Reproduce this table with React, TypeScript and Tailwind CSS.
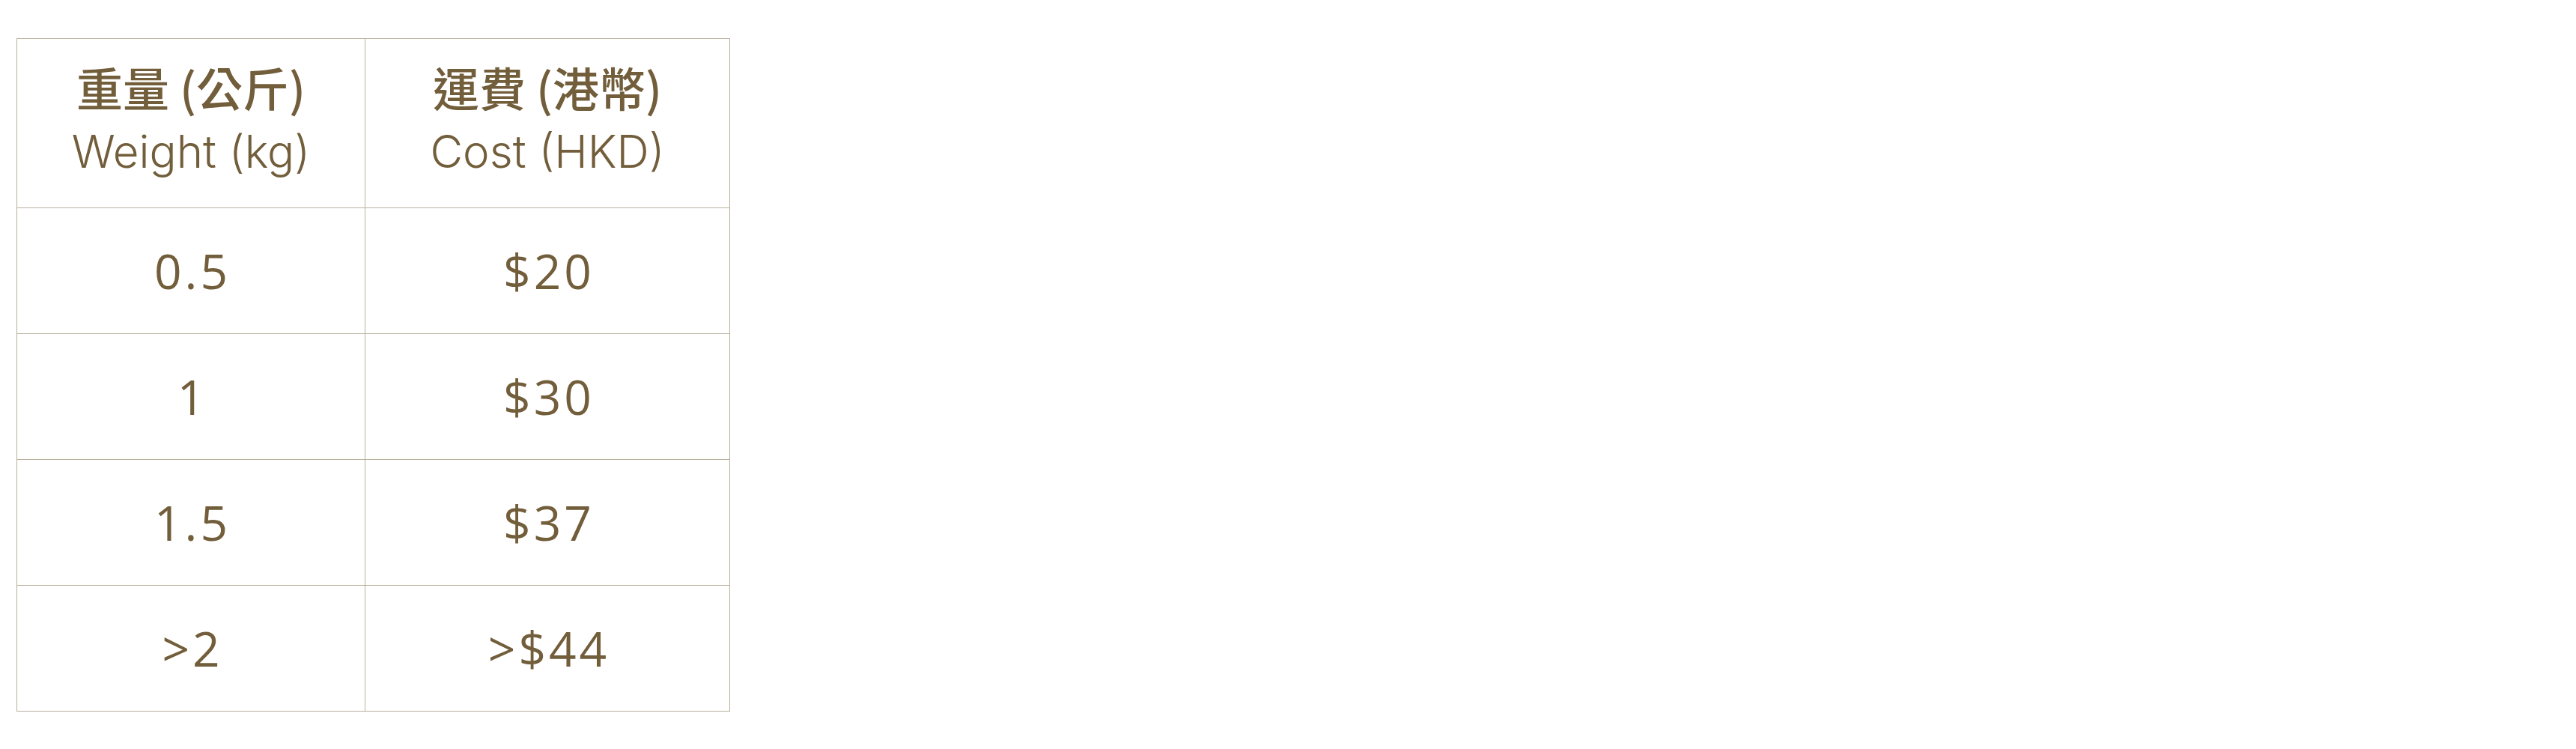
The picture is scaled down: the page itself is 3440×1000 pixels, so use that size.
import React from "react";

const rows: [string, string][] = [
  ["0.5", "$20"],
  ["1", "$30"],
  ["1.5", "$37"],
  [">2", ">$44"],
];

export default function App() {
  return (
    <div className="min-h-screen w-full bg-white pt-[51px] pl-[22px]">
      <div className="grid w-[953px] grid-cols-[465px_487px] border-l border-t border-[#b9b09e] text-[#725e3b]">
        <div className="flex h-[226px] flex-col items-center justify-center border-b border-r border-[#b9b09e] pb-2">
          <div className="-translate-y-1 text-[62px] font-medium leading-[82px] [font-family:'Noto_Sans_CJK_TC',sans-serif]">
            重量 (公斤)
          </div>
          <div className="text-[60px] font-light leading-[82px] [font-family:Inter,sans-serif]">
            Weight (kg)
          </div>
        </div>
        <div className="flex h-[226px] flex-col items-center justify-center border-b border-r border-[#b9b09e] pb-2">
          <div className="-translate-y-1 text-[62px] font-medium leading-[82px] [font-family:'Noto_Sans_CJK_TC',sans-serif]">
            運費 (港幣)
          </div>
          <div className="text-[60px] font-light leading-[82px] [font-family:Inter,sans-serif]">
            Cost (HKD)
          </div>
        </div>
        {rows.map(([w, c]) => (
          <React.Fragment key={w}>
            <div className="flex h-[168px] items-center justify-center border-b border-r border-[#b9b09e] pl-1 text-[64px] leading-none tracking-[4px] [font-family:'Open_Sans',sans-serif]">
              {w}
            </div>
            <div className="flex h-[168px] items-center justify-center border-b border-r border-[#b9b09e] pl-1 text-[64px] leading-none tracking-[4px] [font-family:'Open_Sans',sans-serif]">
              {c}
            </div>
          </React.Fragment>
        ))}
      </div>
    </div>
  );
}
